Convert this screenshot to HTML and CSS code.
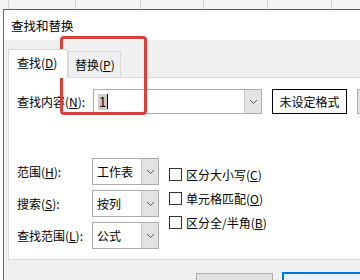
FILE: index.html
```html
<!DOCTYPE html>
<html lang="zh-CN">
<head>
    <meta charset="UTF-8">
    <meta name="viewport" content="width=device-width, initial-scale=1.0">
    <title>查找和替换</title>
    <link rel="stylesheet" href="styles.css">
</head>
<body>
    <div class="sheet">
        <div class="col c0"></div>
        <div class="col c1"></div>
        <div class="col c2"></div>
        <div class="col c3"></div>
        <div class="col c4"></div>
        <div class="col c4"></div>
    </div>

    <div class="dialog">
        <div class="titlebar">查找和替换</div>
        <div class="dlg-body">
            <div class="tabs">
                <div class="tab active">查找(<u>D</u>)</div>
                <div class="tab">替换(<u>P</u>)</div>
            </div>
            <div class="panel">
                <div class="find-row">
                    <span class="label">查找内容(<u>N</u>):</span>
                    <div class="combo wide">
                        <span class="value"><span class="sel">1</span><span class="caret"></span></span>
                        <span class="drop"><svg width="9" height="6" viewBox="0 0 9 6"><polyline points="1,1 4.5,4.5 8,1" fill="none" stroke="#555" stroke-width="1"/></svg></span>
                    </div>
                    <button class="btn fmt">未设定格式</button>
                    <button class="btn gray"></button>
                </div>

                <div class="options">
                    <div class="selects">
                        <div class="opt-row">
                            <span class="label">范围(<u>H</u>):</span>
                            <div class="combo small">
                                <span class="value">工作表</span>
                                <span class="drop"><svg width="9" height="6" viewBox="0 0 9 6"><polyline points="1,1 4.5,4.5 8,1" fill="none" stroke="#555" stroke-width="1"/></svg></span>
                            </div>
                        </div>
                        <div class="opt-row">
                            <span class="label">搜索(<u>S</u>):</span>
                            <div class="combo small">
                                <span class="value">按列</span>
                                <span class="drop"><svg width="9" height="6" viewBox="0 0 9 6"><polyline points="1,1 4.5,4.5 8,1" fill="none" stroke="#555" stroke-width="1"/></svg></span>
                            </div>
                        </div>
                        <div class="opt-row">
                            <span class="label">查找范围(<u>L</u>):</span>
                            <div class="combo small">
                                <span class="value">公式</span>
                                <span class="drop"><svg width="9" height="6" viewBox="0 0 9 6"><polyline points="1,1 4.5,4.5 8,1" fill="none" stroke="#555" stroke-width="1"/></svg></span>
                            </div>
                        </div>
                    </div>
                    <div class="checks">
                        <label class="check"><span class="box"></span><span>区分大小写(<u>C</u>)</span></label>
                        <label class="check"><span class="box"></span><span>单元格匹配(<u>O</u>)</span></label>
                        <label class="check"><span class="box"></span><span>区分全/半角(<u>B</u>)</span></label>
                    </div>
                </div>
            </div>
            <div class="actions">
                <button class="btn gray act"></button>
                <button class="btn primary act"></button>
            </div>
        </div>
    </div>

    <div class="mark"></div>
</body>
</html>
```

FILE: styles.css
```css
body { margin: 0; background: #fff; font-family: "Noto Sans CJK SC", "Microsoft YaHei", sans-serif; font-size: 12px; color: #000; overflow: hidden; height: 280px; position: relative; }
u { text-decoration: underline; text-underline-offset: 1px; }

.sheet { display: flex; height: 9px; background: #f3f3f3; }
.col { height: 9px; border-right: 1px solid #d4d4d4; box-sizing: border-box; flex: none; }
.c0 { width: 9px; }
.c1 { width: 67px; }
.c2 { width: 65px; }
.c3 { width: 63px; }
.c4 { width: 64px; }

.dialog { margin-left: 3px; border-left: 1px solid #6e6e6e; border-top: 1px solid #5c5c5c; height: 271px; }
.titlebar { height: 30px; background: #fff; padding-left: 7px; line-height: 31px; font-size: 12.5px; }
.dlg-body { background: #f0f0f0; height: 241px; padding: 9px 0 0 4px; box-sizing: border-box; }

.tabs { display: flex; align-items: flex-end; height: 28px; }
.tab { box-sizing: border-box; border: 1px solid #d9d9d9; border-bottom: none; background: #f0f0f0; height: 26px; width: 53px; padding-left: 6px; line-height: 25px; flex: none; }
.tab.active { background: #fff; width: 60px; height: 29px; padding-left: 8px; line-height: 26px; margin-bottom: -1px; position: relative; z-index: 1; }

.panel { background: #fff; border: 1px solid #d9d9d9; border-right: none; height: 183px; box-sizing: border-box; padding: 11px 0 0 8px; overflow: hidden; }

.find-row { display: flex; align-items: center; }
.find-row .label { width: 76px; flex: none; }
.label { white-space: nowrap; }

.combo { display: flex; box-sizing: border-box; border: 1px solid #acacac; background: #fff; flex: none; }
.combo .value { flex: 1; display: flex; align-items: center; padding-left: 4px; }
.combo .drop { width: 16px; background: #e3e3e3; border-left: 1px solid #c8c8c8; display: flex; align-items: center; justify-content: center; }
.combo.wide { width: 169px; height: 25px; }
.combo.small { width: 67px; height: 27px; }
.sel { background: #cccccc; padding: 0 1px; line-height: 16px; font-size: 13px; }
.caret { width: 1px; height: 15px; background: #000; }

.btn { font-family: inherit; font-size: 12px; box-sizing: border-box; height: 25px; padding: 0; flex: none; }
.fmt { width: 75px; margin-left: 10px; background: #fdfdfd; border: 1px solid #000; }
.find-row .gray { margin-left: 10px; }
.gray { background: #e1e1e1; border: 1px solid #adadad; width: 75px; }

.options { display: flex; gap: 10px; margin-top: 44px; }
.selects { display: flex; flex-direction: column; gap: 5px; }
.opt-row { display: flex; align-items: center; }
.opt-row .label { width: 75px; flex: none; }
.checks { display: flex; flex-direction: column; padding-top: 4px; }
.check { display: flex; align-items: center; height: 24px; gap: 4px; white-space: nowrap; }
.box { width: 13px; height: 13px; box-sizing: border-box; border: 1px solid #333; background: #fff; flex: none; }

.actions { display: flex; gap: 9px; padding-left: 188px; margin-top: 12px; align-items: flex-start; }
.act { width: 77px; height: 24px; margin-top: 1px; }
.primary { width: 90px; margin-top: 0; background: #e5f1fb; border: 2px solid #0078d7; }

.mark { position: absolute; left: 60px; top: 36px; width: 87px; height: 79px; box-sizing: border-box; border: 3px solid #d9403a; border-radius: 4px; }
```
